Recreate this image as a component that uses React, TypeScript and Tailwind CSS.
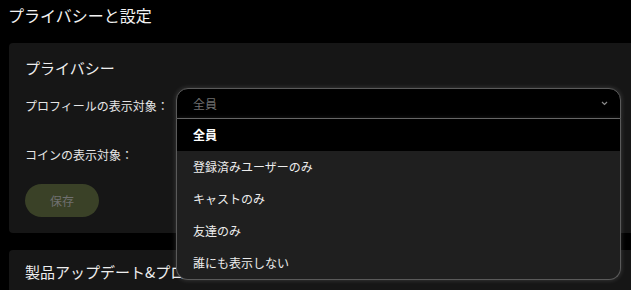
import { useState } from "react"

const options = ["全員", "登録済みユーザーのみ", "キャストのみ", "友達のみ", "誰にも表示しない"]

function Chevron() {
  return (
    <svg width="7" height="5" viewBox="0 0 7 5" fill="none">
      <path d="M1 1l2.5 2.5L6 1" stroke="#8a8a8a" strokeWidth="1.2" />
    </svg>
  )
}

function SelectBox() {
  const [value] = useState("全員")
  return (
    <div className="relative w-[445px]">
      <div className="h-[31px] flex items-center justify-between pl-4 pr-[12px] bg-black border border-[#5a5a5a] rounded-t-[12px] shadow-[0_0_5px_rgba(255,255,255,0.18)]">
        <span className="text-[12px] text-[#6f6f6f]">{value}</span>
        <Chevron />
      </div>
      <ul className="absolute left-0 top-full w-full z-10 bg-[#1f1f1f] border border-t-0 border-[#5a5a5a] rounded-b-[12px] overflow-hidden shadow-[0_0_5px_rgba(255,255,255,0.18)]">
        {options.map((o, i) => (
          <li
            key={o}
            className={
              i === 0
                ? "h-8 flex items-center pl-4 bg-black text-white text-[12px] font-bold"
                : "h-8 flex items-center pl-4 text-[#ececec] text-[12px]"
            }
          >
            {o}
          </li>
        ))}
      </ul>
    </div>
  )
}

export default function App() {
  return (
    <div className="w-[631px] h-[290px] overflow-hidden bg-black font-['Noto_Sans_CJK_JP','Noto_Sans',sans-serif]">
      <h1 className="px-2 pt-[3px] text-[16px] leading-6 text-[#f2f2f2]">プライバシーと設定</h1>

      <div className="ml-[9px] mt-4 w-[640px] bg-[#161616] rounded-[4px] px-4 pt-[14px] pb-4">
        <p className="text-[15px] leading-[22px] text-[#eeeeee]">プライバシー</p>

        <div className="mt-[9px] flex">
          <div className="w-[151px] pt-[8px] whitespace-nowrap text-[12px] leading-[20px] text-[#e6e6e6]">プロフィールの表示対象：</div>
          <SelectBox />
        </div>

        <div className="mt-[21px] h-[30px] flex items-center">
          <div className="w-[151px] whitespace-nowrap text-[12px] leading-[20px] text-[#e6e6e6]">コインの表示対象：</div>
        </div>

        <button className="mt-[14px] w-[74px] h-[33px] rounded-full bg-[#3a4127] text-[12px] text-[#707070]">
          保存
        </button>
      </div>

      <div className="ml-[9px] mt-[17px] w-[640px] h-[60px] bg-[#161616] rounded-[4px] px-4 pt-[11px]">
        <p className="text-[15px] leading-[22px] whitespace-nowrap text-[#eeeeee]">製品アップデート&amp;プロモーション</p>
      </div>
    </div>
  )
}
